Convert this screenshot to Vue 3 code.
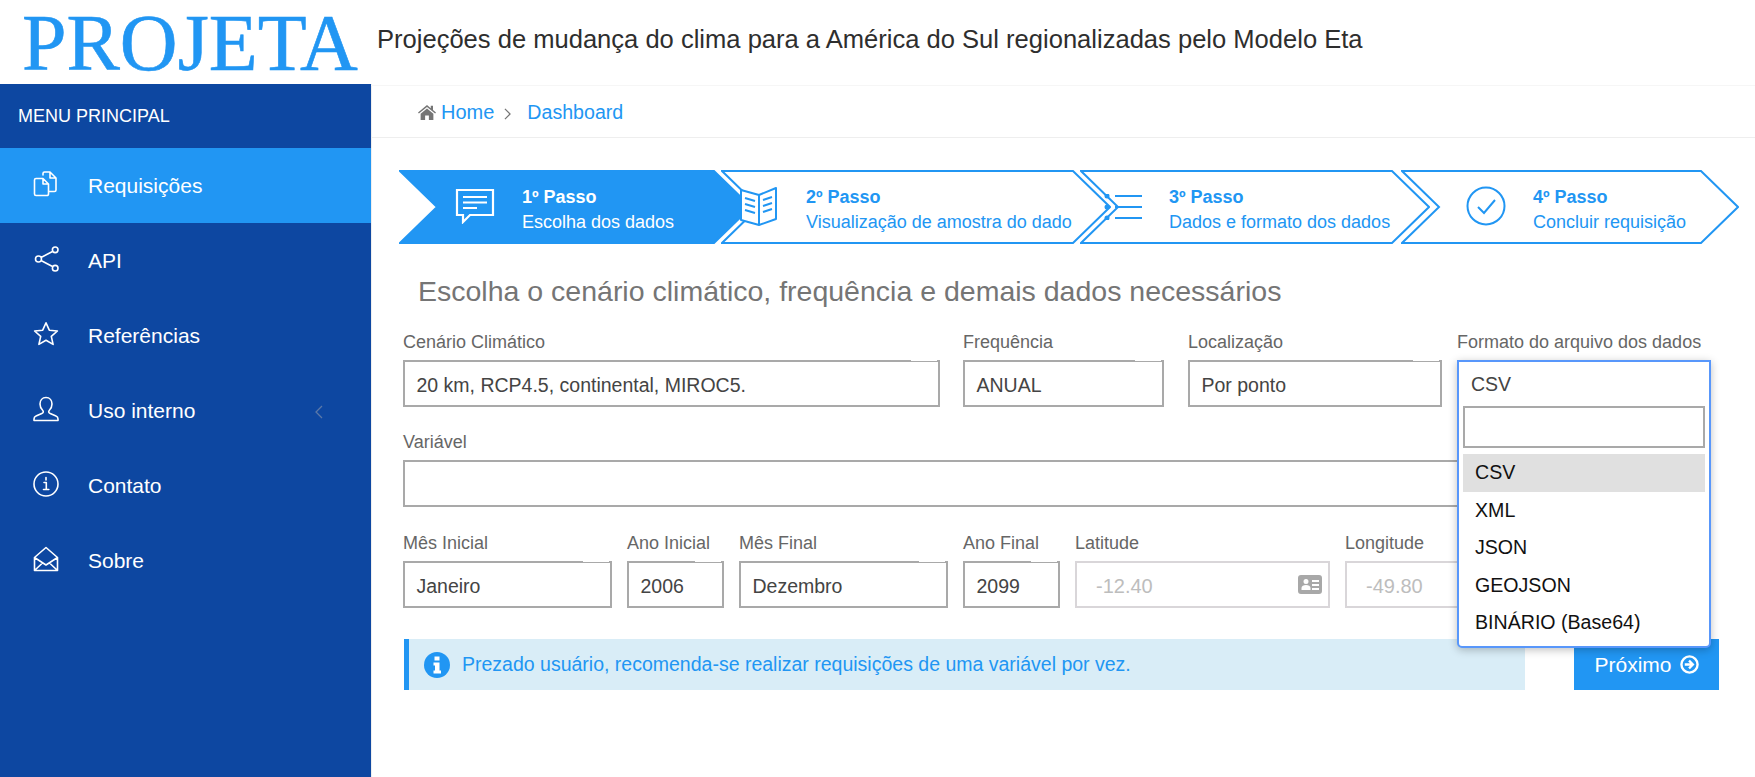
<script setup>
const nav = [
  { label: 'Requisições', active: true, d: 'M10 7.5H3a1.5 1.5 0 0 0-1.5 1.5v14A1.5 1.5 0 0 0 3 24.500h11A1.500 1.500 0 0 0 15.500 23V13L10 7.500v5.500h5.500M10 4V2.500A1.500 1.500 0 0 1 11.500 1H17l6 6v12a1.500 1.500 0 0 1-1.500 1.500H16M17 1v6h6' },
  { label: 'API', d: 'M8 11.500 19.500 5.500M8 14.500 19.500 20.500M8.500 13a3 3 0 1 1-6 0a3 3 0 1 1 6 0M25 3.800a2.800 2.800 0 1 1-5.600 0a2.800 2.800 0 1 1 5.600 0M25 22.200a2.800 2.800 0 1 1-5.600 0a2.800 2.800 0 1 1 5.600 0' },
  { label: 'Referências', d: 'M13 1.800 16.300 9.200 24.400 10 18.300 15.400 20.100 23.400 13 19.300 5.900 23.400 7.700 15.400 1.600 10 9.700 9.200Z' },
  { label: 'Uso interno', chevron: true, d: 'M13 1.500c-3.800 0-6 3-6 6.500 0 3 1.200 5 2.800 6.500 1 1 .4 2.500-1 3L3 20c-1.500.6-2 1.500-2 3v1.500h24V23c0-1.500-.5-2.400-2-3l-5.800-2.500c-1.400-.5-2-2-1-3C17.800 13 19 11 19 8c0-3.500-2.200-6.500-6-6.500Z' },
  { label: 'Contato', d: 'M25 13a12 12 0 1 1-24 0a12 12 0 1 1 24 0M11 11.500h2.300v7M10.500 18.500h5.300M13 6.500v2.500' },
  { label: 'Sobre', d: 'M1.500 24.500V11.500L13 1.500l11.500 10v13ZM1.500 11.500 13 19l11.500-7.500M1.500 24.500 9.500 17M24.500 24.500 16.500 17' },
]

function shape(w, stroke) {
  return `M${stroke} 1H${w - 38}L${w - 1} 37L${w - 38} 73H${stroke}L38 37Z`
}
const steps = [
  { w: 353, cls: 's1', title: '1º Passo', text: 'Escolha dos dados', filled: true },
  { w: 390, cls: 's2', title: '2º Passo', text: 'Visualização de amostra do dado' },
  { w: 350, cls: 's3', title: '3º Passo', text: 'Dados e formato dos dados' },
  { w: 338, cls: 's4', title: '4º Passo', text: 'Concluir requisição' },
].map((s) => ({ ...s, d: shape(s.w, 1) }))

const options = ['CSV', 'XML', 'JSON', 'GEOJSON', 'BINÁRIO (Base64)']
</script>

<template>
  <div class="page">
    <header class="top">
      <div class="logo">PROJETA</div>
      <div class="tagline">Projeções de mudança do clima para a América do Sul regionalizadas pelo Modelo Eta</div>
    </header>

    <div class="body">
      <aside class="side">
        <div class="side-title">MENU PRINCIPAL</div>
        <a v-for="item in nav" :key="item.label" class="nav-item" :class="{ active: item.active }">
          <svg class="nav-icon" viewBox="0 0 26 26" width="26" height="26">
            <path :d="item.d" fill="none" stroke="#fff" stroke-width="1.6" stroke-linejoin="round" stroke-linecap="round" />
          </svg>
          <span>{{ item.label }}</span>
          <svg v-if="item.chevron" class="nav-chevron" viewBox="0 0 8 14" width="8" height="14">
            <path d="M7 1 1 7l6 6" fill="none" stroke="#5b78a8" stroke-width="1.3" />
          </svg>
        </a>
      </aside>

      <main class="main">
        <nav class="crumbs">
          <svg class="home" viewBox="0 0 24 20" width="18" height="15">
            <path fill="#757575" d="M12 0 0 10l1.200 1.400L12 2.600l10.800 8.800L24 10l-4-3.300V1h-3v3.200ZM12 4.500 3.500 11.500V20h6v-6h5v6h6v-8.500Z" />
          </svg>
          <span class="link">Home</span>
          <svg class="sep" viewBox="0 0 8 14" width="7" height="12">
            <path d="M1 1l6 6-6 6" fill="none" stroke="#757575" stroke-width="1.400" />
          </svg>
          <span class="link dash">Dashboard</span>
        </nav>

        <div class="stepper">
          <div v-for="s in steps" :key="s.cls" class="step" :class="[s.cls, { filled: s.filled }]">
            <svg class="step-bg" :width="s.w" height="74" :viewBox="`0 0 ${s.w} 74`">
              <path :d="s.d" :fill="s.filled ? '#2196f3' : '#fff'" stroke="#2196f3" stroke-width="2" stroke-linejoin="miter" />
            </svg>
            <svg v-if="s.cls === 's1'" class="step-icon" viewBox="0 0 40 36" width="40" height="36">
              <path d="M2 2h36v25H15l-7 7v-7H2ZM8 9h24M8 14.500h24M8 20h14" fill="none" stroke="#fff" stroke-width="2.200" />
            </svg>
            <svg v-else-if="s.cls === 's2'" class="step-icon" viewBox="0 0 40 40" width="40" height="40">
              <path d="M2 4 20 9 37 2v31l-17 6L2 34Z" fill="#fff" stroke="#2196f3" stroke-width="2" stroke-linejoin="round" />
              <path d="M20 9v30M6 12l10 3M6 18l10 3M6 24l10 3M24 14l9-3M24 20l9-3M24 26l9-3" fill="none" stroke="#2196f3" stroke-width="2" />
            </svg>
            <svg v-else-if="s.cls === 's3'" class="step-icon" viewBox="0 0 40 26" width="40" height="26">
              <path d="M13 2h27M13 13h27M13 24h27" fill="none" stroke="#2196f3" stroke-width="2" />
              <circle cx="5" cy="2" r="2.500" fill="#2196f3" />
              <circle cx="5" cy="13" r="2.500" fill="#2196f3" />
              <circle cx="5" cy="24" r="2.500" fill="#2196f3" />
            </svg>
            <svg v-else class="step-icon" viewBox="0 0 40 40" width="40" height="40">
              <circle cx="20" cy="20" r="18.500" fill="none" stroke="#2196f3" stroke-width="2" />
              <path d="M12 21l6 6 11-13" fill="none" stroke="#2196f3" stroke-width="2" />
            </svg>
            <div class="step-text">
              <strong>{{ s.title }}</strong>
              <span>{{ s.text }}</span>
            </div>
          </div>
        </div>

        <h2 class="heading">Escolha o cenário climático, frequência e demais dados necessários</h2>

        <div class="row">
          <div class="field c-cen">
            <label>Cenário Climático</label>
            <div class="box">20 km, RCP4.5, continental, MIROC5.</div>
          </div>
          <div class="field c-freq">
            <label>Frequência</label>
            <div class="box">ANUAL</div>
          </div>
          <div class="field c-loc">
            <label>Localização</label>
            <div class="box">Por ponto</div>
          </div>
          <div class="field c-fmt">
            <label>Formato do arquivo dos dados</label>
            <div class="dropdown">
              <div class="dd-value">CSV</div>
              <div class="dd-search"></div>
              <ul class="dd-list">
                <li v-for="(o, i) in options" :key="o" :class="{ hl: i === 0 }">{{ o }}</li>
              </ul>
            </div>
          </div>
        </div>

        <div class="row row2">
          <div class="field c-var">
            <label>Variável</label>
            <div class="box plain"></div>
          </div>
        </div>

        <div class="row row3">
          <div class="field c-month">
            <label>Mês Inicial</label>
            <div class="box">Janeiro</div>
          </div>
          <div class="field c-year">
            <label>Ano Inicial</label>
            <div class="box">2006</div>
          </div>
          <div class="field c-month">
            <label>Mês Final</label>
            <div class="box">Dezembro</div>
          </div>
          <div class="field c-year">
            <label>Ano Final</label>
            <div class="box">2099</div>
          </div>
          <div class="field c-geo lat">
            <label>Latitude</label>
            <div class="box disabled">
              -12.40
              <svg class="card" viewBox="0 0 24 19" width="24" height="19">
                <path fill="#a8a8a8" fill-rule="evenodd" d="M3 0h18a3 3 0 0 1 3 3v13a3 3 0 0 1-3 3H3a3 3 0 0 1-3-3V3a3 3 0 0 1 3-3ZM8 4a2.500 2.500 0 1 0 0 5a2.500 2.500 0 1 0 0-5ZM3.500 15h9v-2c0-2-2-3-4.500-3s-4.500 1-4.500 3ZM14 5v2h7V5ZM14 9v2h7V9ZM14 13v2h7v-2Z" />
              </svg>
            </div>
          </div>
          <div class="field c-geo">
            <label>Longitude</label>
            <div class="box disabled">-49.80</div>
          </div>
        </div>

        <div class="foot">
          <div class="alert">
            <svg viewBox="0 0 26 26" width="26" height="26">
              <circle cx="13" cy="13" r="13" fill="#2196f3" />
              <path fill="#fff" d="M10.500 4.500h5v4h-5ZM9.500 10.500h6v8h1.500v3H9.500v-3H11v-5H9.500Z" />
            </svg>
            <span>Prezado usuário, recomenda-se realizar requisições de uma variável por vez.</span>
          </div>
          <button class="next">
            Próximo
            <svg viewBox="0 0 20 20" width="19" height="19">
              <circle cx="10" cy="10" r="8.500" fill="none" stroke="#fff" stroke-width="2.500" />
              <path d="M5 10h8M9.500 6l4 4-4 4" fill="none" stroke="#fff" stroke-width="2.500" />
            </svg>
          </button>
        </div>
      </main>
    </div>
  </div>
</template>

<style>
html, body { margin: 0; background: #fff; overflow: hidden; }
</style>

<style scoped>
.page {
  width: 1755px;
  height: 777px;
  overflow: hidden;
  font-family: "Liberation Sans", Arial, sans-serif;
  color: #333;
}
.top {
  height: 84px;
  display: flex;
  align-items: flex-start;
  box-sizing: border-box;
}
.logo {
  font-family: "Liberation Serif", "Times New Roman", serif;
  font-size: 80px;
  line-height: 87px;
  color: #2196f3;
  margin-left: 22px;
  width: 355px;
  white-space: nowrap;
  -webkit-text-stroke: 0.6px #2196f3;
}
.tagline {
  font-size: 25.550px;
  line-height: 30px;
  color: #2e2e2e;
  white-space: nowrap;
  margin-top: 24px;
}
.body { display: flex; height: 693px; position: relative; }
.side {
  width: 371px;
  flex: none;
  background: #0d47a1;
  color: #fff;
}
.side-title {
  height: 64px;
  line-height: 64px;
  padding-left: 18px;
  font-size: 18px;
}
.nav-item {
  height: 75px;
  display: flex;
  align-items: center;
  font-size: 21px;
  position: relative;
}
.nav-item.active { background: #2196f3; }
.nav-icon { margin-left: 33px; margin-right: 29px; flex: none; margin-top: -3px; }
.nav-chevron { position: absolute; left: 315px; top: 32px; }
.main {
  flex: 1;
  min-width: 0;
  box-shadow: inset 1px 0 0 #eee;
}
.crumbs {
  height: 53px;
  margin-top: 1px;
  border-bottom: 1px solid #eee;
  border-top: 1px solid #f6f6f6;
  box-sizing: border-box;
  display: flex;
  align-items: center;
  padding: 2px 0 0 47px;
  font-size: 20px;
}
.link { color: #2196f3; }
.dash { font-size: 19.600px; }
.home { margin: 0 5px 1px 0; }
.sep { margin: 2px 16px 0 10px; }
.stepper {
  display: flex;
  margin: 32px 0 0 28px;
  height: 74px;
}
.step { position: relative; flex: none; height: 74px; color: #2196f3; }
.step-bg { position: absolute; left: 0; top: 0; }
.s1 { width: 353px; color: #fff; }
.s2 { width: 390px; margin-left: -31px; }
.s3 { width: 350px; margin-left: -31px; }
.s4 { width: 338px; margin-left: -29px; }
.step-icon { position: absolute; }
.s1 .step-icon { left: 56px; top: 18px; }
.s2 .step-icon { left: 18px; top: 16px; z-index: 2; }
.s3 .step-icon { left: 22px; top: 24px; }
.s4 .step-icon { left: 65px; top: 16px; }
.step-text {
  position: absolute;
  top: 15px;
  display: flex;
  flex-direction: column;
  font-size: 18px;
  line-height: 25px;
  white-space: nowrap;
}
.step-text strong { font-weight: 700; }
.s1 .step-text { left: 123px; }
.s2 .step-text { left: 85px; }
.s3 .step-text { left: 89px; }
.s4 .step-text { left: 132px; }
.heading {
  margin: 28px 0 21px 47px;
  font-size: 28.500px;
  line-height: 38px;
  font-weight: 400;
  color: #757575;
  white-space: nowrap;
}
.row {
  display: flex;
  gap: 24px;
  margin-left: 32px;
}
.row2 { margin-top: 24px; }
.row3 { margin-top: 25px; gap: 15px; }
.field { position: relative; flex: none; }
label {
  display: block;
  height: 29px;
  line-height: 22px;
  font-size: 18px;
  color: #666;
  white-space: nowrap;
}
.box {
  position: relative;
  height: 47px;
  line-height: 46px;
  box-sizing: border-box;
  border: 2px solid #a9a9a9;
  padding: 0 11.500px;
  font-size: 19.500px;
  color: #444;
  white-space: nowrap;
}
.box::after {
  content: "";
  position: absolute;
  top: -2px;
  right: 1px;
  width: 26px;
  height: 1px;
  background: #fff;
}
.box.plain::after, .box.disabled::after { display: none; }
.box.disabled {
  border-color: #d9d6d9;
  color: #bdbdbd;
  padding-left: 19px;
  font-size: 20px;
}
.card { position: absolute; right: 6px; top: 12px; }
.c-cen { width: 537px; margin-right: -1px; }
.c-freq { width: 201px; }
.c-loc { width: 254px; }
.c-fmt { width: 254px; margin-left: -9px; z-index: 5; }
.c-var { width: 1308px; }
.c-month { width: 209px; }
.c-year { width: 97px; }
.c-geo { width: 254px; }
.c-geo.lat { width: 255px; }
.dropdown {
  position: absolute;
  left: 0;
  right: 0;
  top: 29px;
  height: 288px;
  box-sizing: border-box;
  border: 2px solid #5897fb;
  border-radius: 0 0 5px 5px;
  background: #fff;
  box-shadow: 0 2px 8px rgba(0, 0, 0, 0.25);
}
.dd-value {
  height: 44px;
  line-height: 44px;
  padding-left: 12px;
  font-size: 19.500px;
  color: #444;
}
.dd-search {
  height: 42px;
  margin: 0 4px;
  box-sizing: border-box;
  border: 2px solid #a9a9a9;
}
.dd-list {
  list-style: none;
  margin: 6px 4px 0;
  padding: 0;
  font-size: 19.600px;
  color: #111;
}
.dd-list li {
  height: 37.500px;
  line-height: 37.500px;
  padding-left: 12px;
  white-space: nowrap;
}
.dd-list li.hl { background: #e0e0e0; }
.foot {
  display: flex;
  margin: 31px 0 0 33px;
}
.alert {
  width: 1121px;
  height: 51px;
  box-sizing: border-box;
  background: #d9edf7;
  border-left: 5px solid #2196f3;
  display: flex;
  align-items: center;
  gap: 12px;
  padding-left: 15px;
  font-size: 19.500px;
  color: #2196f3;
}
.next {
  margin-left: 49px;
  width: 145px;
  height: 51px;
  border: 0;
  background: #2196f3;
  color: #fff;
  font: inherit;
  font-size: 21px;
  display: flex;
  align-items: center;
  justify-content: center;
  gap: 8px;
  padding: 0;
}
</style>
